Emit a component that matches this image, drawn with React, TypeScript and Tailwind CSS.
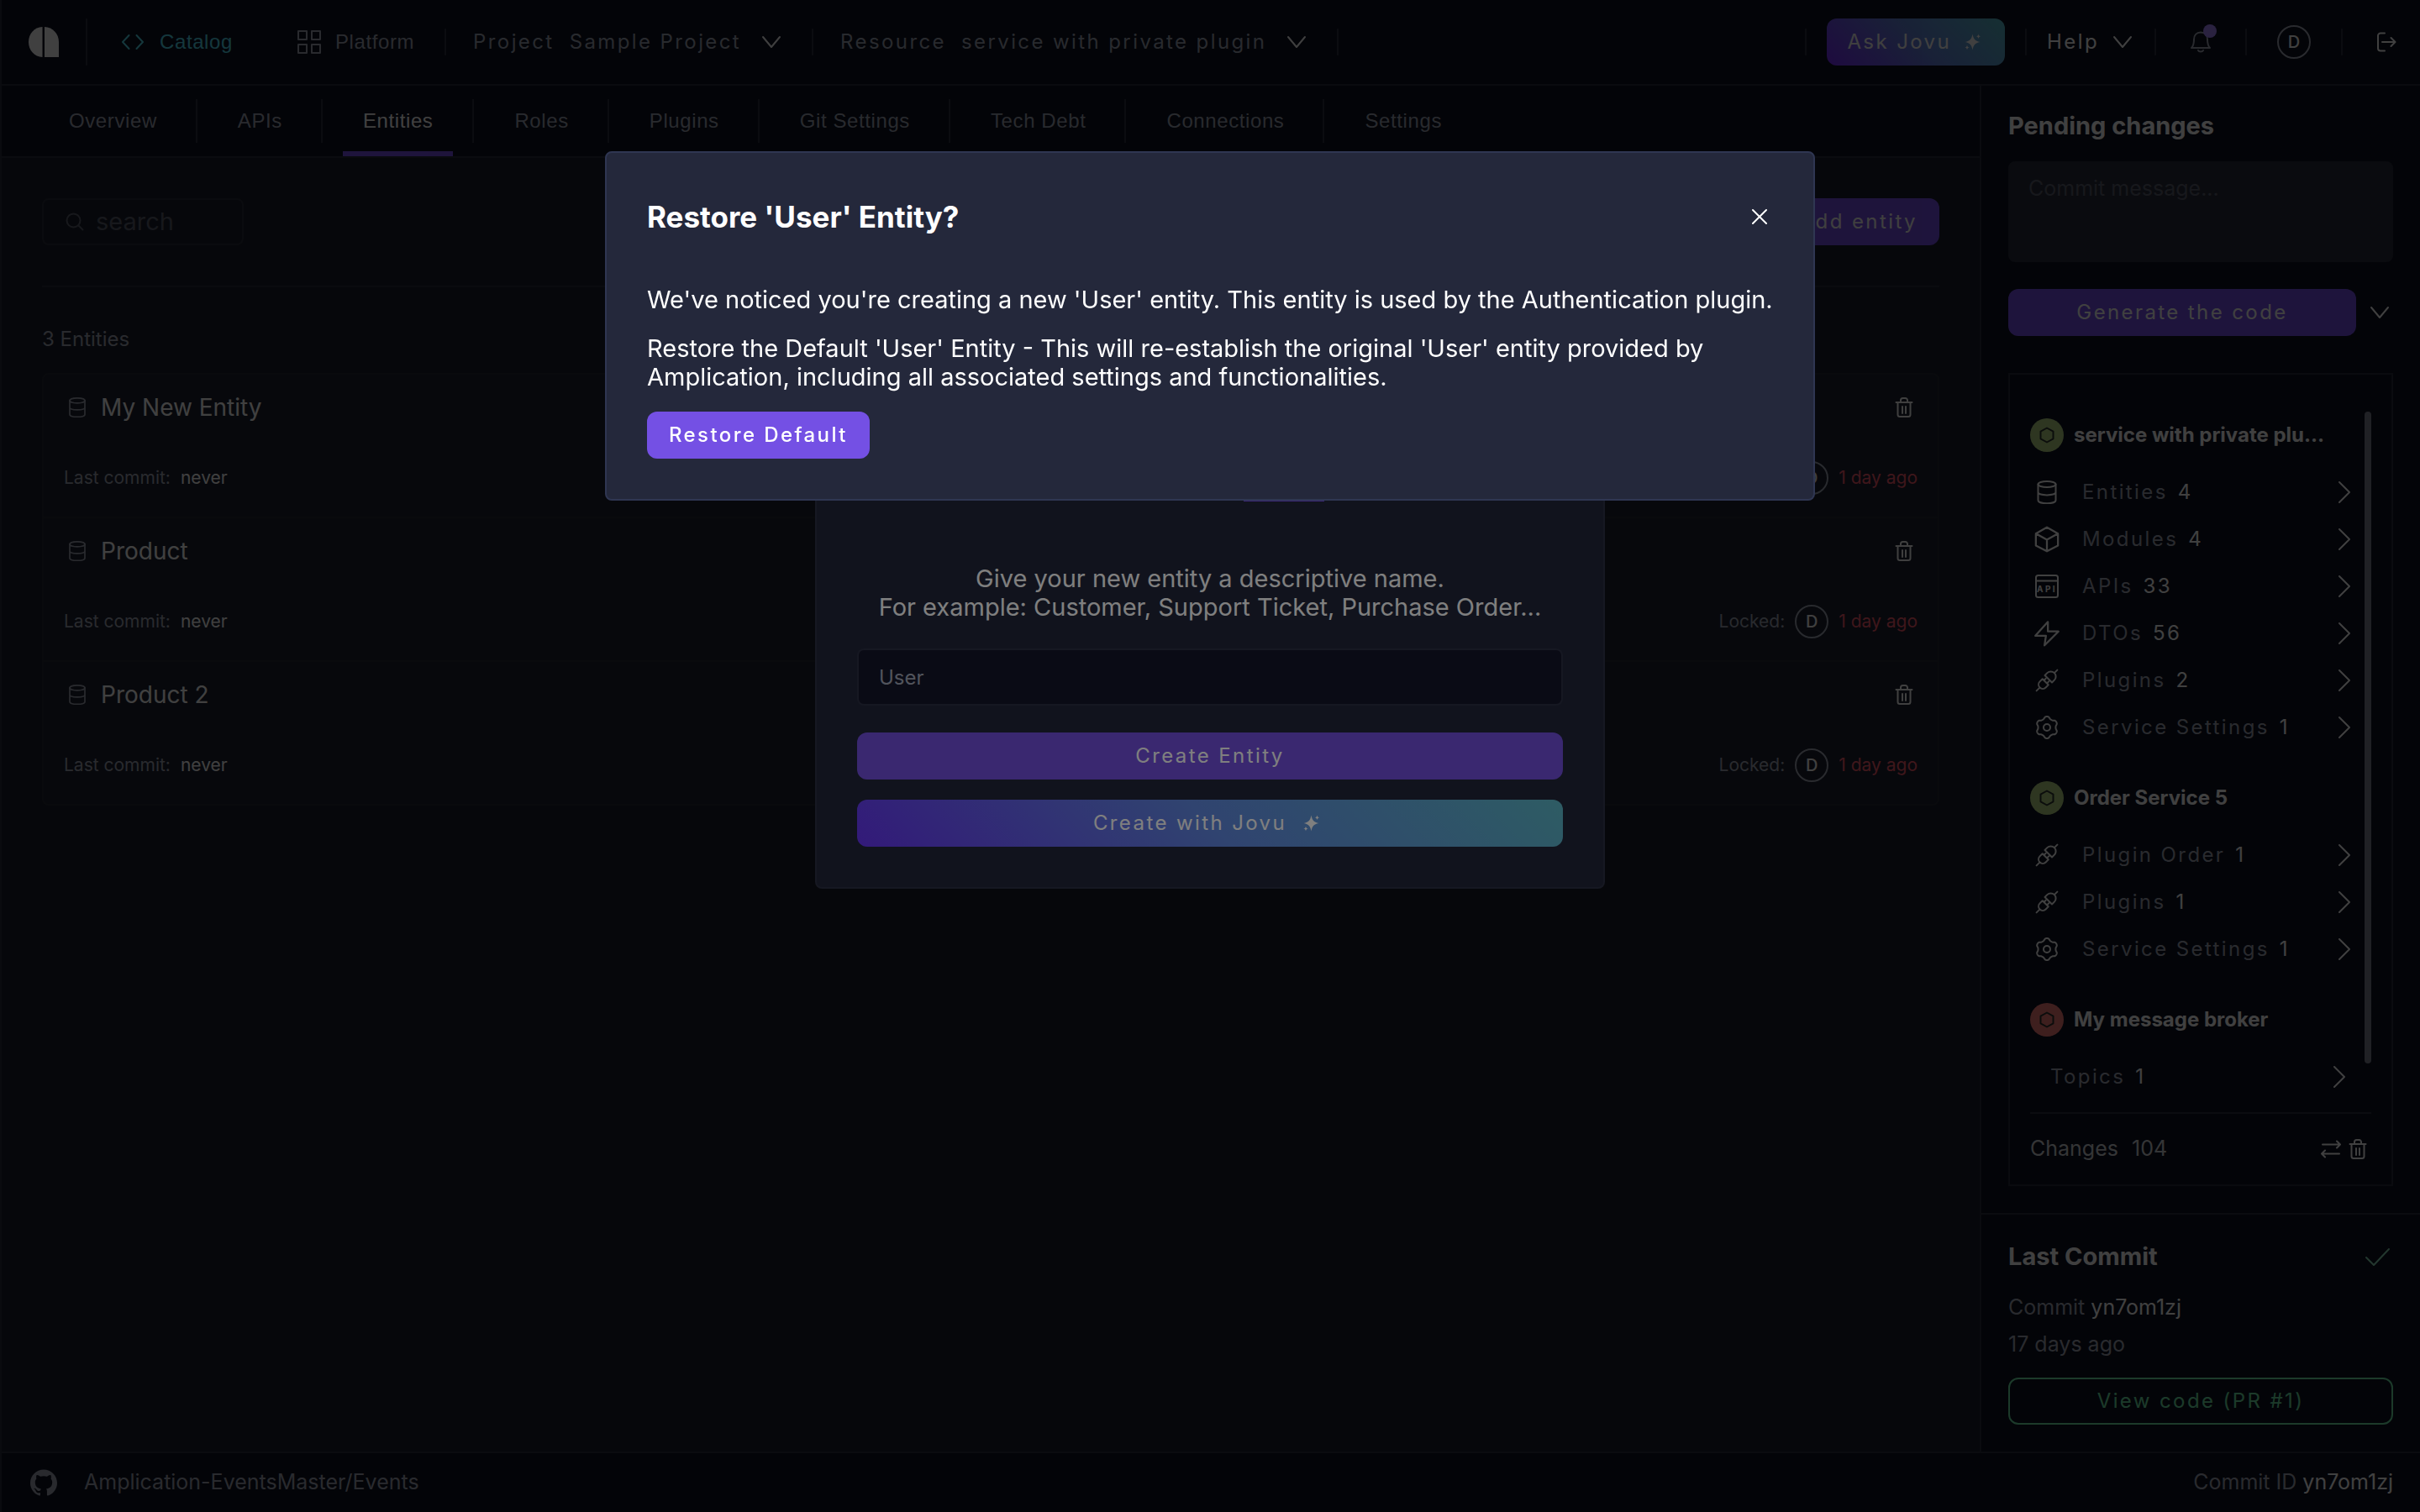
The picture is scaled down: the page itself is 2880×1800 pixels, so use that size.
import React from "react";

type IconProps = { className?: string };

function Svg({
  className = "size-7",
  box = 28,
  width = 2,
  children,
}: {
  className?: string;
  box?: number;
  width?: number;
  children: React.ReactNode;
}) {
  return (
    <svg
      aria-hidden="true"
      className={`shrink-0 ${className}`}
      viewBox={`0 0 ${box} ${box}`}
      fill="none"
      stroke="currentColor"
      strokeWidth={width}
      strokeLinecap="round"
      strokeLinejoin="round"
    >
      {children}
    </svg>
  );
}

const Logo = () => (
  <svg aria-hidden="true" className="size-9 shrink-0" viewBox="0 0 36 36" fill="currentColor">
    <path d="M16.5 0v36C7 35.500 0 28 0 18S7 .5 16.500 0Z" />
    <path d="M19 0c9.500.5 17 8 17 18v18H19Z" />
  </svg>
);

const ChevronDown = ({ className = "size-6" }: IconProps) => (
  <Svg box={24} className={className}>
    <path d="m2 6 10 12L22 6" />
  </Svg>
);

const ChevronRight = () => (
  <Svg box={28} className="size-7">
    <path d="m8 2 12 12L8 26" />
  </Svg>
);

const CodeIcon = () => (
  <Svg className="size-7">
    <path d="M9.500 6 2 14l7.500 8M18.500 6l7.500 8-7.500 8" />
  </Svg>
);

const GridIcon = () => (
  <Svg box={30} className="size-[30px]">
    <path d="M2 2h10v10H2ZM18 2h10v10H18ZM2 18h10v10H2ZM18 18h10v10H18Z" />
  </Svg>
);

const Sparkle = () => (
  <svg aria-hidden="true" className="size-5 shrink-0" viewBox="0 0 20 20" fill="currentColor">
    <path d="M9.500.5c1 6 3 8.300 8.800 9.500-5.800 1.200-7.800 3.500-8.800 9.500C8.500 13.500 6.500 11.200.7 10 6.500 8.800 8.500 6.500 9.500.5Z" />
    <path d="M16.500.5c.4 1.800 1 2.400 2.800 2.800-1.800.4-2.400 1-2.800 2.800-.4-1.800-1-2.400-2.800-2.800 1.800-.4 2.400-1 2.800-2.800ZM3 13.700c.4 1.800 1 2.400 2.800 2.800-1.800.4-2.400 1-2.800 2.800-.4-1.800-1-2.400-2.800-2.800 1.800-.4 2.400-1 2.800-2.800Z" />
  </svg>
);

const BellIcon = () => (
  <Svg box={26} className="size-[26px]">
    <path d="M2 20h22c-2-2-3-4-3-10 0-5-3-8.500-8-8.500S5 5 5 10c0 6-1 8-3 10ZM10 23c1 2 5 2 6 0" />
  </Svg>
);

const LogoutIcon = () => (
  <Svg box={24} className="size-6">
    <path d="M10 1.500H5a3 3 0 0 0-3 3v15a3 3 0 0 0 3 3h5M7 12h15M17.500 7l5 5-5 5" />
  </Svg>
);

const SearchIcon = () => (
  <Svg box={22} className="size-[22px]">
    <circle cx="9.500" cy="9.500" r="8" />
    <path d="m15.500 15.500 5 5" />
  </Svg>
);

const DatabaseIcon = ({ className = "size-7" }: IconProps) => (
  <Svg className={className}>
    <ellipse cx="14" cy="4.500" rx="10.500" ry="3.500" />
    <path d="M3.500 4.500v19c0 5 21 5 21 0v-19M3.500 14c0 4.500 21 4.500 21 0" />
  </Svg>
);

const CubeIcon = () => (
  <Svg className="size-8">
    <path d="M14 1.500 25.500 8v12.500L14 26.500 2.500 20.500V8ZM2.500 8 14 14.500 25.500 8M14 14.500v12" />
  </Svg>
);

const ApiIcon = () => (
  <Svg className="size-7">
    <rect x="1" y="1" width="26" height="26" rx="2.500" />
    <path d="M1 7.500h26" />
    <text
      x="14"
      y="21"
      textAnchor="middle"
      fontFamily="Inter, sans-serif"
      fontSize="10"
      fontWeight="700"
      fill="currentColor"
      stroke="none"
    >
      API
    </text>
  </Svg>
);

const BoltIcon = () => (
  <Svg className="size-8">
    <path d="M15 2 2 16.500h11L11.500 26.500 26 12H15Z" />
  </Svg>
);

const PluginIcon = () => (
  <Svg className="size-7">
    <path
      transform="rotate(-45 14 14)"
      d="M-3.500 14h5M26.500 14h5M11.500 9H7a5 5 0 0 0 0 10h4.500ZM16.500 8v12h4a6 6 0 0 0 0-12ZM11.500 11.500h3M11.500 16.500h3"
    />
  </Svg>
);

const gearOutline = Array.from({ length: 120 }, (_, i) => {
  const angle = (i / 120) * Math.PI * 2;
  const radius = 11.7 + 1.4 * Math.tanh(1.4 * Math.cos(6 * angle));
  return `${(14 + radius * Math.sin(angle)).toFixed(2)} ${(14 - radius * Math.cos(angle)).toFixed(2)}`;
}).join("L");

const GearIcon = () => (
  <Svg className="size-7">
    <path d={`M${gearOutline}Z`} />
    <circle cx="14" cy="14" r="4" />
  </Svg>
);

const TrashIcon = () => (
  <Svg box={24} className="size-6">
    <path d="M2.500 6h19M4.500 6v14.500A2.500 2.500 0 0 0 7 23h10a2.500 2.500 0 0 0 2.500-2.500V6M8 6V3.500A2.500 2.500 0 0 1 10.500 1h3A2.500 2.500 0 0 1 16 3.500V6M10 11v8M14 11v8" />
  </Svg>
);

const SwapIcon = () => (
  <Svg box={24} className="size-6">
    <path d="M2 6.500h21M19 2.500l4 4-4 4M22 17.500H1M5 13.500l-4 4 4 4" />
  </Svg>
);

const CheckIcon = () => (
  <Svg box={32} className="size-8">
    <path d="m2 17 9 9L29 7" />
  </Svg>
);

const CloseIcon = () => (
  <Svg box={20} className="size-5">
    <path d="m2 2 16 16M18 2 2 18" />
  </Svg>
);

const HexIcon = () => (
  <Svg box={20} className="size-5">
    <path d="m10 1.500 7.500 4.200v8.600L10 18.500l-7.500-4.200V5.700Z" />
  </Svg>
);

const GithubMark = () => (
  <svg aria-hidden="true" className="size-8 shrink-0" viewBox="0 0 24 24" fill="currentColor">
    <path d="M12 .297c-6.630 0-12 5.373-12 12 0 5.303 3.438 9.800 8.205 11.385.6.113.82-.258.82-.577 0-.285-.01-1.040-.015-2.040-3.338.724-4.042-1.610-4.042-1.610C4.422 18.070 3.633 17.700 3.633 17.700c-1.087-.744.084-.729.084-.729 1.205.084 1.838 1.236 1.838 1.236 1.070 1.835 2.809 1.305 3.495.998.108-.776.417-1.305.76-1.605-2.665-.3-5.466-1.332-5.466-5.930 0-1.310.465-2.380 1.235-3.220-.135-.303-.54-1.523.105-3.176 0 0 1.005-.322 3.300 1.230.96-.267 1.980-.399 3-.405 1.020.006 2.040.138 3 .405 2.280-1.552 3.285-1.230 3.285-1.230.645 1.653.24 2.873.12 3.176.765.84 1.230 1.910 1.230 3.220 0 4.610-2.805 5.625-5.475 5.920.42.36.81 1.096.81 2.220 0 1.606-.015 2.896-.015 3.286 0 .315.21.69.825.57C20.565 22.092 24 17.592 24 12.297c0-6.627-5.373-12-12-12" />
  </svg>
);

const Divider = ({ className = "h-8 w-0.5" }: IconProps) => (
  <span className={`shrink-0 bg-[#2c3040] ${className}`} />
);

const Avatar = () => (
  <span className="flex size-10 shrink-0 items-center justify-center rounded-full border-2 border-[#a3a8b8] text-xl font-medium text-white">
    D
  </span>
);

function Header() {
  return (
    <header className="flex h-[102px] shrink-0 items-center border-b-2 border-[#2a2e3c] bg-[#0c1020] pr-7 pl-8 text-2xl text-[#a3a8b8]">
      <a href="#home" aria-label="Home" className="text-white">
        <Logo />
      </a>
      <Divider className="ml-8 h-14 w-0.5" />
      <a
        href="#catalog"
        className="ml-10 flex items-center gap-[18px] font-['Liberation_Sans',sans-serif] tracking-wide text-[#53dbee]"
      >
        <CodeIcon />
        Catalog
      </a>
      <a
        href="#platform"
        className="ml-[76px] flex items-center gap-4 font-['Liberation_Sans',sans-serif] tracking-wide"
      >
        <GridIcon />
        Platform
      </a>
      <Divider className="mr-8 ml-9 h-8 w-0.5" />
      <button type="button" className="flex items-center tracking-widest">
        <span>Project</span>
        <span className="ml-[18px]">Sample Project</span>
        <ChevronDown className="ml-6 size-6 text-white" />
      </button>
      <Divider className="mr-8 ml-9 h-8 w-0.5" />
      <button type="button" className="flex items-center tracking-widest">
        <span>Resource</span>
        <span className="ml-[18px]">service with private plugin</span>
        <ChevronDown className="ml-6 size-6 text-white" />
      </button>
      <Divider className="ml-9 h-8 w-0.5" />

      <div className="ml-auto flex items-center text-white">
        <Divider />
        <button
          type="button"
          className="mx-6 flex h-14 items-center gap-4 rounded-xl bg-[linear-gradient(45deg,#7a2cff,#6482dc,#58bcc8)] px-6 tracking-widest"
        >
          Ask Jovu
          <span className="mr-1 flex">
            <Sparkle />
          </span>
        </button>
        <Divider />
        <button type="button" className="mr-6.5 ml-6 flex items-center gap-4 tracking-widest">
          Help
          <ChevronDown />
        </button>
        <Divider />
        <button
          type="button"
          aria-label="Notifications"
          className="relative mx-10 flex text-[#a3a8b8]"
        >
          <BellIcon />
          <span className="absolute -top-2 -right-1.5 size-4 rounded-full bg-[#a787ff]" />
        </button>
        <Divider />
        <button type="button" aria-label="Account" className="mx-9">
          <Avatar />
        </button>
        <Divider />
        <button type="button" aria-label="Sign out" className="ml-10">
          <LogoutIcon />
        </button>
      </div>
    </header>
  );
}

const tabs = [
  "Overview",
  "APIs",
  "Entities",
  "Roles",
  "Plugins",
  "Git Settings",
  "Tech Debt",
  "Connections",
  "Settings",
];

function Tabs() {
  return (
    <nav className="flex h-[86px] items-stretch border-b-2 border-[#2a2e3c] bg-[#0c1020] pl-8 font-['Liberation_Sans',sans-serif] text-2xl tracking-wide">
      {tabs.map((tab, i) => (
        <div key={tab} className="flex items-center">
          {i > 0 && <Divider className="h-13 w-0.5" />}
          <a
            href={`#${tab}`}
            className={
              tab === "Entities"
                ? "mr-[23px] ml-6 flex h-full items-center border-y-6 border-t-transparent border-b-[#7950ed] px-6 text-white"
                : "mr-[22px] ml-6 flex h-full items-center px-6 text-[#a3a8b8]"
            }
          >
            {tab}
          </a>
        </div>
      ))}
    </nav>
  );
}

const entities = ["My New Entity", "Product", "Product 2"];

function EntityRow({ name }: { name: string }) {
  return (
    <li className="px-6 pt-[23px] pb-[26px]">
      <div className="flex h-8 items-center justify-between">
        <a href={`#${name}`} className="flex items-center gap-3 text-[28px] leading-8 text-white">
          <span className="flex w-8 justify-center text-[#a3a8b8]">
            <DatabaseIcon className="size-6" />
          </span>
          {name}
        </a>
        <button type="button" aria-label={`Delete ${name}`} className="flex w-8 justify-center text-white">
          <TrashIcon />
        </button>
      </div>
      <div className="mt-12 flex h-10 items-center justify-between text-[21px] text-[#a3a8b8]">
        <p className="flex gap-3">
          Last commit: <span className="text-white">never</span>
        </p>
        <p className="flex items-center gap-3">
          Locked:
          <Avatar />
          <span className="text-[#f85b6e]">1 day ago</span>
        </p>
      </div>
    </li>
  );
}

function Entities() {
  return (
    <main className="flex-1 px-12 pt-12 text-[#a3a8b8]">
      <div className="flex items-center justify-between">
        <label className="flex h-14 w-60 items-center gap-3.5 rounded-lg border-2 border-[#2a2e3c] px-6.5 text-[#5c6070]">
          <SearchIcon />
          <input
            type="search"
            aria-label="Search entities"
            placeholder="search"
            className="w-full min-w-0 bg-transparent text-[29px] outline-none placeholder:text-[#5c6070]"
          />
        </label>
        <button
          type="button"
          className="h-14 rounded-xl bg-[#7950ed] px-6.5 text-2xl tracking-widest text-white"
        >
          Add entity
        </button>
      </div>
      <hr className="mt-12 border-t-2 border-[#2a2e3c]" />
      <p className="mt-[46px] text-2xl leading-8">3 Entities</p>
      <ul className="mt-6 divide-y-2 divide-[#262a36] rounded-lg border-2 border-[#262a36] bg-[#1c2030]">
        {entities.map((name) => (
          <EntityRow key={name} name={name} />
        ))}
      </ul>
    </main>
  );
}

type Change = { label: string; count: number; icon?: React.ReactNode };
type Group = { name: string; tone: "green" | "red"; changes: Change[] };

const groups: Group[] = [
  {
    name: "service with private plu…",
    tone: "green",
    changes: [
      { label: "Entities", count: 4, icon: <DatabaseIcon /> },
      { label: "Modules", count: 4, icon: <CubeIcon /> },
      { label: "APIs", count: 33, icon: <ApiIcon /> },
      { label: "DTOs", count: 56, icon: <BoltIcon /> },
      { label: "Plugins", count: 2, icon: <PluginIcon /> },
      { label: "Service Settings", count: 1, icon: <GearIcon /> },
    ],
  },
  {
    name: "Order Service 5",
    tone: "green",
    changes: [
      { label: "Plugin Order", count: 1, icon: <PluginIcon /> },
      { label: "Plugins", count: 1, icon: <PluginIcon /> },
      { label: "Service Settings", count: 1, icon: <GearIcon /> },
    ],
  },
  {
    name: "My message broker",
    tone: "red",
    changes: [{ label: "Topics", count: 1 }],
  },
];

function ChangeGroup({ group }: { group: Group }) {
  return (
    <section>
      <h3 className="flex items-center gap-3 text-2xl font-bold text-white">
        <span
          className={`flex size-10 shrink-0 items-center justify-center rounded-full text-[#2c3430] ${
            group.tone === "green" ? "bg-[#b8d884]" : "bg-[#f87b78]"
          }`}
        >
          <HexIcon />
        </span>
        <span className="whitespace-nowrap">{group.name}</span>
      </h3>
      <ul className="mt-5">
        {group.changes.map((change) => (
          <li key={change.label}>
            <button
              type="button"
              className={`flex h-14 w-full items-center text-left text-2xl tracking-widest text-[#a3a8b8] ${
                change.icon ? "pr-2.5" : "pr-4 pl-6"
              }`}
            >
              {change.icon && (
                <span className="mr-[22px] flex w-10 justify-center text-white">{change.icon}</span>
              )}
              {change.label}
              <span className="ml-3 text-white">{change.count}</span>
              <span className="ml-auto flex text-white">
                <ChevronRight />
              </span>
            </button>
          </li>
        ))}
      </ul>
    </section>
  );
}

function Sidebar() {
  return (
    <aside className="flex w-[524px] shrink-0 flex-col border-l-2 border-[#2a2e3c] bg-[#0c1020] text-[25px] text-[#a3a8b8]">
      <section className="flex flex-1 flex-col px-8 pt-8 pb-8">
        <h2 className="text-[29px] leading-8 font-bold text-white">Pending changes</h2>
        <textarea
          aria-label="Commit message"
          placeholder="Commit message..."
          className="mt-[26px] h-[120px] resize-none rounded-lg bg-[#2a2e3c] px-6 py-4 leading-8 outline-none placeholder:text-[#5c6070]"
        />
        <div className="mt-8 flex items-center gap-4">
          <button
            type="button"
            className="h-14 flex-1 rounded-xl bg-[#7950ed] text-2xl tracking-widest text-white"
          >
            Generate the code
          </button>
          <button type="button" aria-label="More build options" className="mr-1 flex text-white">
            <ChevronDown />
          </button>
        </div>
        <div className="mt-11 flex flex-1 flex-col border-2 border-[#2a2e3c] px-6">
          <div className="flex flex-1 pt-11">
            <div className="flex min-w-0 flex-1 flex-col gap-9 pt-2">
              {groups.map((group) => (
                <ChangeGroup key={group.name} group={group} />
              ))}
            </div>
            <span className="h-[93%] w-2 shrink-0 rounded-full bg-[#808494]" />
          </div>
          <div className="flex h-[86px] items-center border-t-2 border-[#2f3342] text-[#d0d2d8]">
            Changes <span className="ml-4">104</span>
            <button type="button" aria-label="Compare changes" className="mr-2 ml-auto text-white">
              <SwapIcon />
            </button>
            <button type="button" aria-label="Discard changes" className="mr-1 text-white">
              <TrashIcon />
            </button>
          </div>
        </div>
      </section>
      <section className="flex flex-col border-t-2 border-[#2f3342] px-8 pt-8.5 pb-8">
        <div className="flex h-8 items-center justify-between">
          <h2 className="text-[29px] leading-8 font-bold text-white">Last Commit</h2>
          <span className="mr-0.5 text-[#8dd9b9]">
            <CheckIcon />
          </span>
        </div>
        <p className="mt-7 leading-8">
          Commit{" "}
          <a href="#commit" className="text-white">
            yn7om1zj
          </a>
        </p>
        <p className="mt-3 leading-8">17 days ago</p>
        <a
          href="#pull-request"
          className="mt-6 flex h-14 items-center justify-center rounded-xl border-2 border-[#70e6a8] text-2xl tracking-widest text-[#70e6a8]"
        >
          View code (PR #1)
        </a>
      </section>
    </aside>
  );
}

function Footer() {
  return (
    <footer className="flex h-[72px] shrink-0 items-center justify-between border-t-2 border-[#2a2e3c] bg-[#0c1020] pr-8 pl-[34px] text-[25px] text-[#a3a8b8]">
      <a href="#repository" className="flex items-center gap-8">
        <GithubMark />
        Amplication-EventsMaster/Events
      </a>
      <p>
        Commit ID{" "}
        <a href="#commit" className="text-white">
          yn7om1zj
        </a>
      </p>
    </footer>
  );
}

function NewEntityDialog() {
  return (
    <div className="fixed inset-0 flex items-start justify-center bg-black/50 pt-[180px]">
      <div
        role="dialog"
        aria-label="New entity"
        className="flex w-[940px] flex-col rounded-lg border-2 border-[#2c3044] bg-[#22273b] px-12 pb-12 text-white"
      >
        <div className="flex h-[415px] flex-col items-end justify-end px-[284px]">
          <span className="h-[3px] w-24 bg-[#7950ed]" />
        </div>
        <p className="mt-[75px] text-center text-[29px] leading-[34px]">
          Give your new entity a descriptive name.
          <br />
          For example: Customer, Support Ticket, Purchase Order...
        </p>
        <input
          aria-label="Entity name"
          defaultValue="User"
          className="mt-8 h-[68px] rounded-lg border-2 border-[#2c3044] bg-[#15162a] px-6 text-2xl text-[#a3a8b8] outline-none"
        />
        <button type="button" className="mt-8 h-14 rounded-xl bg-[#7450e0] text-2xl tracking-widest">
          Create Entity
        </button>
        <button
          type="button"
          className="mt-6 flex h-14 items-center justify-center gap-5 rounded-xl bg-[linear-gradient(45deg,#6634f4,#6088e0,#5cb8c8)] pr-2 text-2xl tracking-widest"
        >
          Create with Jovu
          <Sparkle />
        </button>
      </div>
    </div>
  );
}

function RestoreDialog() {
  return (
    <div className="fixed inset-0 flex items-start justify-center bg-black/50 pt-[180px]">
      <div
        role="dialog"
        aria-labelledby="restore-title"
        className="w-1/2 rounded-lg border-2 border-[#2f3652] bg-[#24283b] px-12 pt-[50px] pb-12 text-[29px] text-white"
      >
        <div className="flex items-center justify-between">
          <h1 id="restore-title" className="text-[35px] leading-[52px] font-bold">
            Restore 'User' Entity?
          </h1>
          <button type="button" aria-label="Close" className="mr-1.5">
            <CloseIcon />
          </button>
        </div>
        <p className="mt-14 leading-[34px]">
          We've noticed you're creating a new 'User' entity. This entity is used by the
          Authentication plugin.
        </p>
        <p className="mt-6 leading-[34px]">
          Restore the Default 'User' Entity - This will re-establish the original 'User' entity
          provided by Amplication, including all associated settings and functionalities.
        </p>
        <button
          type="button"
          className="mt-6 block h-14 rounded-xl bg-[#7450e4] px-6.5 text-2xl font-medium tracking-widest"
        >
          Restore Default
        </button>
      </div>
    </div>
  );
}

export default function App() {
  return (
    <div className="flex min-h-screen flex-col border-l-2 border-[#2a2e3c] bg-[#1a1e2c] font-[Inter,sans-serif]">
      <Header />
      <div className="flex flex-1">
        <div className="flex min-w-0 flex-1 flex-col">
          <Tabs />
          <Entities />
        </div>
        <Sidebar />
      </div>
      <Footer />
      <NewEntityDialog />
      <RestoreDialog />
    </div>
  );
}
